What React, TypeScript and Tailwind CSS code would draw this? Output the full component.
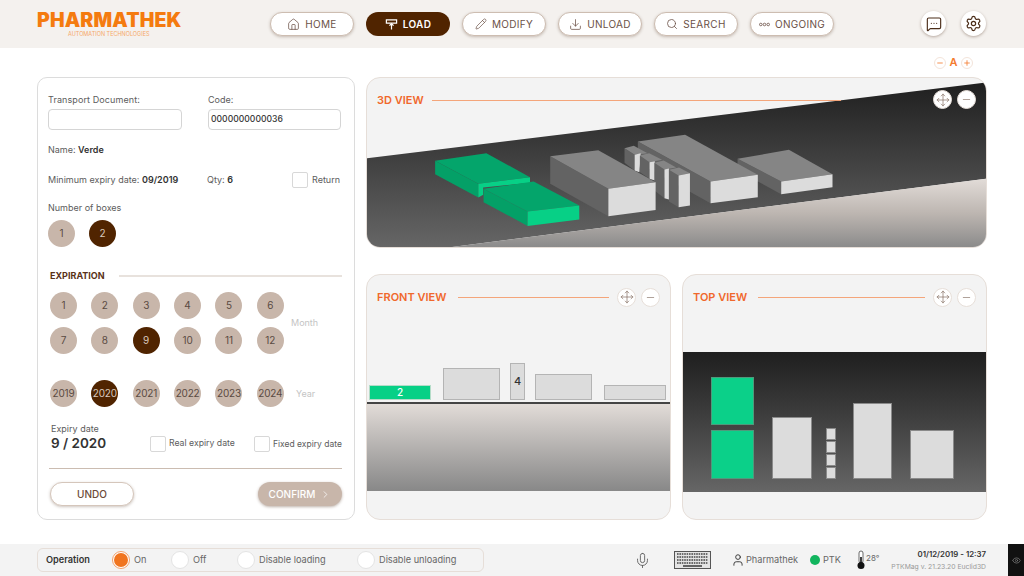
import { Home, Pencil, Download, Search, MessageSquareMore, Settings, Mic, User, Eye, Move, Minus, Plus, ChevronRight } from "lucide-react";

const navItems = ["HOME", "LOAD", "MODIFY", "UNLOAD", "SEARCH", "ONGOING"];
const months = [1, 2, 3, 4, 5, 6, 7, 8, 9, 10, 11, 12];
const years = [2019, 2020, 2021, 2022, 2023, 2024];

function LoadIcon() {
  return (
    <svg width="13" height="13" viewBox="0 0 14 14" fill="none" stroke="currentColor" strokeWidth="1.3">
      <path d="M1.5 2h11v3.5h-11z" />
      <path d="M7 12.5V6M4.8 8.2 7 6l2.2 2.2" />
    </svg>
  );
}

function OngoingIcon() {
  return (
    <svg width="11" height="5" viewBox="0 0 11 5" fill="none" stroke="currentColor" strokeWidth="0.8">
      <circle cx="1.8" cy="2.5" r="1.3" />
      <circle cx="5.5" cy="2.5" r="1.3" />
      <circle cx="9.2" cy="2.5" r="1.3" />
    </svg>
  );
}

function NavIcon({ name }: { name: string }) {
  if (name === "HOME") return <Home size={13} strokeWidth={1.4} />;
  if (name === "LOAD") return <LoadIcon />;
  if (name === "MODIFY") return <Pencil size={12} strokeWidth={1.4} />;
  if (name === "UNLOAD") return <Download size={13} strokeWidth={1.4} />;
  if (name === "SEARCH") return <Search size={12} strokeWidth={1.6} />;
  return <OngoingIcon />;
}

function Header() {
  return (
    <header className="h-12 bg-[#f4f1ee] flex items-start pl-[37px]">
      <div className="w-[233px] flex flex-col">
        <div className="w-[144px] mt-[9px] text-[19.5px] leading-[22px] font-black text-[#f47b0f] tracking-[0.15px] whitespace-nowrap">PHARMATHEK</div>
        <div className="ml-[31px] mt-[-1px] text-[5.5px] leading-[9px] text-[#f6a868] whitespace-nowrap">AUTOMATION TECHNOLOGIES</div>
      </div>
      <nav className="flex gap-3 mt-3">
        {navItems.map((item) => (
          <div
            key={item}
            className={
              item === "LOAD"
                ? "w-[84px] h-6 rounded-full bg-[#502400] text-white font-semibold flex items-center justify-center gap-[5px] text-[10px] tracking-[0.3px]"
                : "w-[84px] h-6 rounded-full bg-white border border-[#cdbdb1] text-[#6b5146] font-normal flex items-center justify-center gap-[5px] text-[10px] tracking-[0.3px] shadow-[0_1px_3px_rgba(90,60,40,0.3)]"
            }
          >
            <NavIcon name={item} />
            <span>{item}</span>
          </div>
        ))}
      </nav>
      <div className="flex gap-[15px] ml-[87px] mt-[11px]">
        <div className="w-[25px] h-[25px] rounded-full bg-white flex items-center justify-center text-[#4a2c18] shadow-[0_1px_3px_rgba(90,60,40,0.4)]">
          <MessageSquareMore size={16} strokeWidth={1.7} />
        </div>
        <div className="w-[25px] h-[25px] rounded-full bg-white flex items-center justify-center text-[#4a2c18] shadow-[0_1px_3px_rgba(90,60,40,0.4)]">
          <Settings size={17} strokeWidth={1.7} />
        </div>
      </div>
    </header>
  );
}

function Round({ label, active, small }: { label: string | number; active?: boolean; small?: boolean }) {
  return (
    <div
      className={
        (active ? "bg-[#502400] text-[#d8c8bc] " : "bg-[#c8b6aa] text-[#5a4a42] ") +
        (small ? "text-[10px] tracking-[-0.2px] " : "text-[10px] ") +
        "w-[27px] h-[27px] rounded-full flex items-center justify-center shrink-0"
      }
    >
      {label}
    </div>
  );
}

function Check() {
  return <div className="w-4 h-4 rounded-[2px] bg-white border border-[#d8d8d8] shrink-0" />;
}

function FormPanel() {
  return (
    <section className="w-[318px] h-[443px] border border-[#dcdcdc] rounded-[10px] bg-white pl-[10px] pr-[12px] flex flex-col text-[9px] text-[#5c5c5c]">
      <div className="flex gap-[26px] mt-4">
        <div className="w-[134px]">
          <div className="h-[12px] leading-[12px] tracking-[0.1px]">Transport Document:</div>
          <div className="h-[21px] mt-[3px] rounded-[4px] border border-[#d5d5d5]" />
        </div>
        <div className="w-[133px]">
          <div className="h-[12px] leading-[12px]">Code:</div>
          <div className="h-[21px] mt-[3px] rounded-[4px] border border-[#d5d5d5] pl-[2px] flex items-center text-[#333] text-[8.6px] font-medium">0000000000036</div>
        </div>
      </div>
      <div className="mt-[14px] h-[12px] leading-[12px]">Name: <b className="font-semibold text-[#333]">Verde</b></div>
      <div className="mt-[15px] h-[18px] flex items-center">
        <div className="w-[159px]">Minimum expiry date: <b className="font-semibold text-[#333]">09/2019</b></div>
        <div className="w-[85px]">Qty: <b className="font-semibold text-[#333]">6</b></div>
        <Check />
        <div className="ml-[4px]">Return</div>
      </div>
      <div className="mt-[13px] h-[12px] leading-[12px]">Number of boxes</div>
      <div className="flex gap-[14px] mt-[6px]">
        <Round label={1} />
        <Round label={2} active />
      </div>
      <div className="flex items-center gap-[14px] mt-[23px] ml-[2px]">
        <div className="text-[9px] font-bold text-[#5a3218] leading-[12px]">EXPIRATION</div>
        <div className="flex-1 h-[2px] bg-[#e8e2dd]" />
      </div>
      <div className="flex mt-[10px] ml-[2px]">
        <div className="w-[234px] grid grid-cols-6 gap-x-[14.2px] gap-y-[8px]">
          {months.map((m) => (
            <Round key={m} label={m} active={m === 9} />
          ))}
        </div>
        <div className="self-center ml-[7px] text-[#c4c4c4]">Month</div>
      </div>
      <div className="flex items-center mt-[26px] ml-[2px]">
        <div className="w-[234px] grid grid-cols-6 gap-x-[14.2px]">
          {years.map((y) => (
            <Round key={y} label={y} active={y === 2020} small />
          ))}
        </div>
        <div className="ml-[12px] text-[#c4c4c4]">Year</div>
      </div>
      <div className="flex items-end mt-[16px] ml-[3px]">
        <div className="w-[99px] shrink-0">
          <div className="leading-[12px]">Expiry date</div>
          <div className="text-[13.5px] leading-[17px] font-semibold text-[#333]">9 / 2020</div>
        </div>
        <div className="flex items-center w-[104px] shrink-0 text-[8.7px]">
          <Check />
          <span className="ml-[3px] whitespace-nowrap">Real expiry date</span>
        </div>
        <div className="flex items-center shrink-0 text-[8.5px]">
          <Check />
          <span className="ml-[3px] whitespace-nowrap">Fixed expiry date</span>
        </div>
      </div>
      <div className="h-px bg-[#cbbcb1] mt-[16px] ml-[1px]" />
      <div className="flex justify-between mt-[13px] ml-[2px]">
        <div className="w-[84px] h-6 rounded-full bg-white border border-[#d5c6bb] text-[#6b4a38] font-medium text-[10px] flex items-center justify-center shadow-[0_1px_3px_rgba(90,60,40,0.3)]">UNDO</div>
        <div className="w-[84px] h-6 rounded-full bg-[#c8b6aa] text-white font-medium text-[10px] flex items-center justify-center gap-[5px] shadow-[0_1px_3px_rgba(90,60,40,0.4)]">
          CONFIRM
          <ChevronRight size={11} strokeWidth={1.6} />
        </div>
      </div>
    </section>
  );
}

function ViewButtons() {
  return (
    <div className="flex gap-[5px]">
      <div className="w-[19px] h-[19px] rounded-full bg-white border border-[#e6ded8] flex items-center justify-center text-[#7a6255]">
        <Move size={14} strokeWidth={1.1} />
      </div>
      <div className="w-[19px] h-[19px] rounded-full bg-white border border-[#e6ded8] flex items-center justify-center text-[#7a6255]">
        <Minus size={11} strokeWidth={1.3} />
      </div>
    </div>
  );
}

function Solid({ top, left, front, c1, c2, c3 }: { top: string; left: string; front: string; c1: string; c2: string; c3: string }) {
  return (
    <>
      <polygon points={left} fill={c2} />
      <polygon points={top} fill={c1} />
      <polygon points={front} fill={c3} />
    </>
  );
}

const G = { c1: "#858585", c2: "#636363", c3: "#dcdcdc" };
const E = { c1: "#04a56b", c2: "#04a067", c3: "#07d086" };

function View3D() {
  return (
    <section className="relative w-[621px] h-[171px] border border-[#e6ded8] rounded-[14px] overflow-hidden bg-[#f3f3f3]">
      <svg viewBox="0 0 620 170" className="block w-[621px] h-[171px] -m-px">
        <defs>
          <linearGradient id="dark" x1="0" y1="0" x2="0" y2="1">
            <stop offset="0" stopColor="#1f1f1f" />
            <stop offset="1" stopColor="#666666" />
          </linearGradient>
          <linearGradient id="floor" x1="0" y1="0" x2="0" y2="1">
            <stop offset="0" stopColor="#e2dcd8" />
            <stop offset="0.5" stopColor="#bdb6b1" />
            <stop offset="1" stopColor="#8a8a8a" />
          </linearGradient>
        </defs>
        <polygon points="0,81 620,5 620,101 81,170 0,170" fill="url(#dark)" />
        <polygon points="81,170 620,101 620,170" fill="url(#floor)" />
        <g transform="translate(-6,-2) scale(0.4032,0.3333)">
          <Solid {...G} top="935,250 1062,223 1170,296 1043,318" left="935,250 1043,318 1043,356 935,285" front="1043,318 1170,296 1170,335 1043,356" />
          <Solid {...G} top="688,198 805,178 985,298 868,318" left="688,198 868,318 868,383 688,262" front="868,318 985,298 985,365 868,383" />
          <Solid {...G} top="655,218 678,211 712,233 680,238" left="655,218 680,238 680,285 655,262" front="680,238 695,233 692,290 680,285" />
          <Solid {...G} top="693,240 716,233 748,253 717,260" left="693,240 717,260 717,310 693,290" front="717,260 730,257 730,315 717,310" />
          <Solid {...G} top="729,262 752,255 783,276 754,282" left="729,262 754,282 754,368 729,345" front="754,282 765,279 765,372 754,368" />
          <Solid {...G} top="765,283 790,276 817,293 789,300" left="765,283 789,300 789,395 765,378" front="789,300 817,293 817,390 789,395" />
          <Solid {...G} top="471,242 590,224 732,320 615,340" left="471,242 615,340 615,422 471,325" front="615,340 732,320 732,403 615,422" />
          <Solid {...E} top="186,256 313,233 421,305 293,325" left="186,256 293,325 293,366 186,296" front="293,325 421,305 421,322 305,336 305,358 293,366" />
          <Solid {...E} top="306,340 430,318 543,390 415,408" left="306,340 415,408 415,451 306,380" front="415,408 543,390 543,432 415,451" />
        </g>
      </svg>
      <div className="absolute top-[14px] left-[10px] w-[464px] flex items-center gap-2">
        <span className="text-[11px] font-semibold text-[#f0682c] whitespace-nowrap">3D VIEW</span>
        <div className="flex-1 h-px bg-[#f4a57a]" />
      </div>
      <div className="absolute top-[12px] right-[10px]">
        <ViewButtons />
      </div>
    </section>
  );
}

function PanelHead({ title, line }: { title: string; line: string }) {
  return (
    <div className="h-[44px] pl-[10px] pr-[10px] flex items-center">
      <span className="text-[11px] font-semibold text-[#f0682c] whitespace-nowrap">{title}</span>
      <div className={line + " h-px bg-[#f4a57a] ml-auto mr-[8px]"} />
      <ViewButtons />
    </div>
  );
}

function FrontBox({ className, label }: { className: string; label?: string }) {
  return <div className={className + " border border-[#b4b4b4] bg-[#dcdcdc] flex items-center justify-center text-[11px] font-medium text-[#333]"}>{label}</div>;
}

function FrontView() {
  return (
    <section className="w-[305px] h-[246px] border border-[#e6ded8] rounded-[14px] overflow-hidden bg-[#f3f3f3] flex flex-col">
      <PanelHead title="FRONT VIEW" line="w-[151px]" />
      <div className="h-[81px] flex items-end pl-[2px]">
        <div className="w-[62px] h-[15px] border border-[#b4dcc8] bg-[#07d086] flex items-center justify-center text-[10px] font-medium text-white">2</div>
        <FrontBox className="w-[57px] h-[32px] ml-[12px]" />
        <FrontBox className="w-[15px] h-[37px] ml-[10px]" label="4" />
        <FrontBox className="w-[57px] h-[26px] ml-[10px]" />
        <FrontBox className="w-[62px] h-[15px] ml-[12px]" />
      </div>
      <div className="h-[2px] mt-[2px] -mx-px bg-[#444]" />
      <div className="h-[87px] -mx-px bg-gradient-to-b from-[#e2dcd8] to-[#888888]" />
    </section>
  );
}

function TopBox({ className }: { className: string }) {
  return <div className={className + " border border-[#8a8a8a] bg-[#dcdcdc]"} />;
}

function TopView() {
  return (
    <section className="w-[305px] h-[246px] border border-[#e6ded8] rounded-[14px] overflow-hidden bg-[#f3f3f3] flex flex-col">
      <PanelHead title="TOP VIEW" line="w-[167px]" />
      <div className="mt-[33px] h-[140px] -mx-px bg-gradient-to-b from-[#1f1f1f] to-[#666666] flex items-end pl-[29px] pb-[13px]">
        <div className="flex flex-col gap-[5px]">
          <div className="w-[43px] h-[48px] border border-[#4f9a7c] bg-[#0bd089]" />
          <div className="w-[43px] h-[49px] border border-[#4f9a7c] bg-[#0bd089]" />
        </div>
        <TopBox className="w-[40px] h-[62px] ml-[18px]" />
        <div className="flex flex-col gap-px ml-[14px]">
          <TopBox className="w-[10px] h-[12px]" />
          <TopBox className="w-[10px] h-[12px]" />
          <TopBox className="w-[10px] h-[12px]" />
          <TopBox className="w-[10px] h-[12px]" />
        </div>
        <TopBox className="w-[39px] h-[76px] ml-[17px]" />
        <TopBox className="w-[44px] h-[49px] ml-[18px]" />
      </div>
    </section>
  );
}

function Radio({ label, on }: { label: string; on?: boolean }) {
  return (
    <div className="flex items-center gap-[4px]">
      {on ? (
        <div className="w-[18px] h-[18px] rounded-full bg-white border border-[#f3a06a] flex items-center justify-center">
          <div className="w-[14px] h-[14px] rounded-full bg-[#f0741f]" />
        </div>
      ) : (
        <div className="w-[18px] h-[18px] rounded-full bg-white border border-[#e4e4e4]" />
      )}
      <span>{label}</span>
    </div>
  );
}

function KeyboardIcon() {
  const rows = [3, 6, 9, 12];
  return (
    <svg width="37" height="18" viewBox="0 0 37 18" fill="none">
      <rect x="0.5" y="0.5" width="36" height="17" fill="#e4e4e4" stroke="#555" />
      {rows.map((y) => (
        <line key={y} x1="3" x2="34" y1={y} y2={y} stroke="#444" strokeWidth="1.6" strokeDasharray="1.6 0.8" />
      ))}
      <line x1="9" x2="28" y1="15" y2="15" stroke="#444" strokeWidth="1.6" />
    </svg>
  );
}

function ThermoIcon() {
  return (
    <svg width="10" height="20" viewBox="0 0 10 20" fill="none">
      <rect x="3" y="1" width="4" height="12" rx="2" fill="#fff" stroke="#444" strokeWidth="0.8" />
      <rect x="4.2" y="7" width="1.6" height="7" fill="#111" />
      <circle cx="5" cy="15.5" r="3.5" fill="#111" />
    </svg>
  );
}

function Footer() {
  return (
    <footer className="h-8 bg-[#f3f3f3] flex items-center pl-[37px] text-[9.2px] text-[#666]">
      <div className="w-[447px] h-6 shrink-0 border border-[#e6ded8] rounded-[6px] pl-2 flex items-center">
        <span className="w-[66px] font-semibold text-[#333]">Operation</span>
        <div className="w-[59px]"><Radio label="On" on /></div>
        <div className="w-[66px]"><Radio label="Off" /></div>
        <div className="w-[120px]"><Radio label="Disable loading" /></div>
        <Radio label="Disable unloading" />
      </div>
      <Mic size={17} strokeWidth={1.2} className="ml-[150px] text-[#555] shrink-0" />
      <div className="ml-[23px] shrink-0"><KeyboardIcon /></div>
      <User size={14} strokeWidth={1.6} className="ml-[20px] text-[#333] shrink-0" />
      <span className="ml-[1px] w-[60px] shrink-0">Pharmathek</span>
      <div className="w-[10px] h-[10px] rounded-full bg-[#12b55e] ml-[4px] shrink-0" />
      <span className="ml-[3px] w-[16px] shrink-0">PTK</span>
      <div className="ml-[17px] shrink-0"><ThermoIcon /></div>
      <span className="w-[12px] mb-[5px] text-[8px] shrink-0">28°</span>
      <div className="w-[108px] shrink-0 flex flex-col items-end">
        <b className="text-[7.8px] leading-[12px] font-semibold text-[#333] whitespace-nowrap">01/12/2019 - 12:37</b>
        <span className="text-[6.8px] leading-[12px] text-[#999] whitespace-nowrap mt-[1px]">PTKMag v. 21.23.20 Euclid3D</span>
      </div>
      <div className="ml-auto w-4 h-8 bg-[#111] flex items-center justify-center text-[#777]">
        <Eye size={9} />
      </div>
    </footer>
  );
}

export default function App() {
  return (
    <div className="w-[1024px] h-[576px] overflow-hidden bg-white flex flex-col font-['Inter',sans-serif]">
      <Header />
      <main className="h-[496px] px-[37px]">
        <div className="h-[29px] flex items-center justify-end pr-[14px] gap-px text-[#f47b2f]">
          <div className="w-[12px] h-[12px] rounded-full border border-[#f3e4da] flex items-center justify-center"><Minus size={8} strokeWidth={2.5} /></div>
          <span className="w-[13px] text-center text-[11px] font-semibold">A</span>
          <div className="w-[12px] h-[12px] rounded-full border border-[#f3e4da] flex items-center justify-center"><Plus size={8} strokeWidth={2.5} /></div>
        </div>
        <div className="flex gap-[11px]">
          <FormPanel />
          <div className="flex flex-col gap-[26px]">
            <View3D />
            <div className="flex gap-[11px]">
              <FrontView />
              <TopView />
            </div>
          </div>
        </div>
      </main>
      <Footer />
    </div>
  );
}
